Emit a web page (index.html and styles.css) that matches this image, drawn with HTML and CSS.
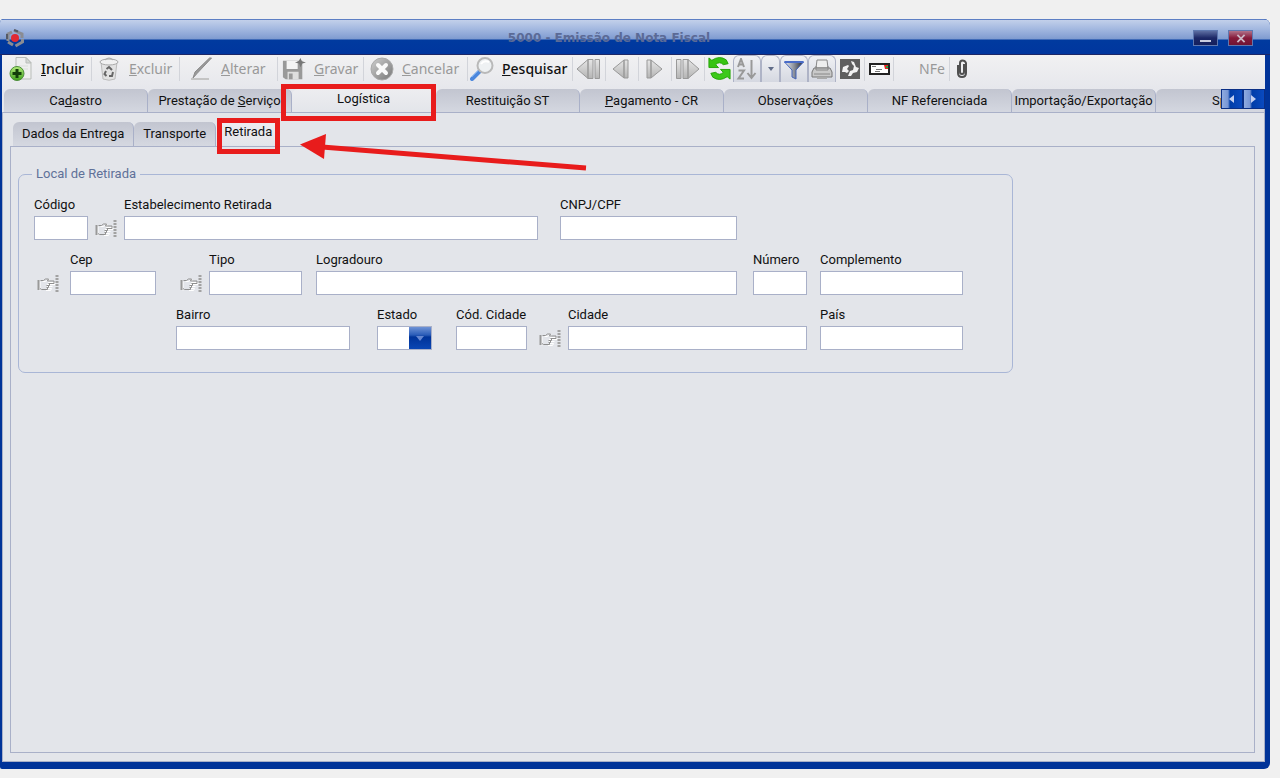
FILE: index.html
```
<!DOCTYPE html>
<html lang="pt-BR">
<head>
  <meta charset="UTF-8">
  <meta name="viewport" content="width=device-width, initial-scale=1.0">
  <title>5000 - Emissão de Nota Fiscal</title>
  <link rel="stylesheet" href="styles.css">
</head>
<body>

<svg class="defs" aria-hidden="true">
  <defs>
    <linearGradient id="gray" x1="0" y1="0" x2="0" y2="1">
      <stop offset="0" stop-color="#e6e6e6"/><stop offset="1" stop-color="#b4b4b4"/>
    </linearGradient>
    <linearGradient id="dark" x1="0" y1="0" x2="1" y2="1">
      <stop offset="0" stop-color="#cfcfcf"/><stop offset="1" stop-color="#777"/>
    </linearGradient>
    <linearGradient id="green" x1="0" y1="0" x2="0" y2="1">
      <stop offset="0" stop-color="#b4ec7c"/><stop offset="1" stop-color="#3fa01c"/>
    </linearGradient>
    <linearGradient id="steel" x1="0" y1="0" x2="1" y2="0">
      <stop offset="0" stop-color="#eef0f4"/><stop offset=".5" stop-color="#8c919c"/><stop offset="1" stop-color="#22262e"/>
    </linearGradient>
    <symbol id="hand" viewBox="0 0 22 20">
      <g fill="none" stroke="#fff" transform="translate(1 1)">
        <path d="M2 6.500v9M4.500 6.500h3l2-1.500h2l-1 2.500h6.500v2h-6M8 15.500h4.500l1-2M9 9.500h5M9 11.500h5.500M9 13.500h4.500"/>
      </g>
      <path d="M1.500 6v10" stroke="#999" stroke-width="2"/>
      <path d="M3.500 6.500h3l2-1.500h3l-1 2h6.500v2.500h-5.500M12.500 9.500v2h-3M11.500 11.500v2h-2M10.500 13.500v2h-6l-1.500-1" fill="none" stroke="#8f8f8f"/>
      <path d="M20 1v18" stroke="#a2a2a2" stroke-width="3" stroke-dasharray="2 1"/>
    </symbol>
  </defs>
</svg>

<main class="window">
  <header class="titlebar">
    <svg class="logo" viewBox="0 0 20 20">
      <g fill="none" stroke="#8a8c93" stroke-width="3">
        <path d="M3 13V6l4-2"/><path d="M9 2.500l8 3.500v4"/><path d="M17.500 11v3l-7 4"/><path d="M3 14l5 3"/>
      </g>
      <path d="M9 2l4 1.500M2 6v5" stroke="#555a66" stroke-width="2"/>
      <circle cx="10" cy="10" r="4" fill="#e02a34"/>
    </svg>
    <h1>5000 - Emissão de Nota Fiscal</h1>
    <div class="win-buttons">
      <button class="minimize" aria-label="Minimizar"></button>
      <button class="close" aria-label="Fechar"><svg viewBox="0 0 10 10"><path d="M1 1l8 8M9 1l-8 8" stroke="#c9b5c4" stroke-width="2"/></svg></button>
    </div>
  </header>

  <nav class="toolbar">
    <button class="tool incluir active">
      <svg viewBox="0 0 24 24"><path d="M7 .5h10l5 5V22H7z" fill="#eee" stroke="#b9bdb9"/><path d="M17 .5V6h5z" fill="#d4d8d4" stroke="#b9bdb9"/><path d="M10 9h9M10 12h9" stroke="#dadeda"/><circle cx="8" cy="16.500" r="7" fill="url(#green)" stroke="#4d8d3b"/><path d="M8 12v9M3.500 16.500h9" stroke="#123d0a" stroke-width="3"/></svg>
      <span><u>I</u>ncluir</span>
    </button>
    <button class="tool excluir" disabled>
      <svg viewBox="0 0 24 24"><path d="M4 5l2 17q6 2.500 12 0l2-17z" fill="#e2e2e2" stroke="#bbb"/><ellipse cx="12" cy="5" rx="9" ry="3" fill="#f1f1f1" stroke="#aaa"/><path d="M8 3q4-4 8 0" fill="none" stroke="#aaa"/><path d="M9.500 12l2.500-2 3 3M16 15l-1 4h-3M9.500 19l-2-2 1.500-3" fill="none" stroke="#666" stroke-width="2"/></svg>
      <span><u>E</u>xcluir</span>
    </button>
    <button class="tool alterar" disabled>
      <svg viewBox="0 0 24 24"><path d="M2 22h18" stroke="#c4c4c4" stroke-width="2"/><path d="M22.500 1L8 16.500l-4 4.500 2-6L20.500 1z" fill="#999" stroke="#8c8c8c"/></svg>
      <span><u>A</u>lterar</span>
    </button>
    <button class="tool gravar" disabled>
      <svg viewBox="0 0 26 24"><path d="M1 3h21v20H4l-3-2z" fill="#999"/><path d="M5 3h12v9H5z" fill="#f4f4f4"/><path d="M6 15h12v8H6z" fill="#dedede"/><path d="M7.500 17h4v6h-4z" fill="#999"/><path d="M20 0l1.500 3.500L26 5l-4 1-2 4-1.500-4L14 5l4-1.500z" fill="#777"/></svg>
      <span><u>G</u>ravar</span>
    </button>
    <button class="tool cancelar" disabled>
      <svg viewBox="0 0 24 24"><circle cx="12" cy="12" r="11" fill="url(#dark)" stroke="#aaa"/><path d="M8 8l8 8M16 8l-8 8" stroke="#fafafa" stroke-width="4" stroke-linecap="round"/></svg>
      <span><u>C</u>ancelar</span>
    </button>
    <button class="tool pesquisar active">
      <svg viewBox="0 0 24 24"><path d="M2 22l8-8" stroke="#4b87dd" stroke-width="4" stroke-linecap="round"/><path d="M1.500 20l6-6" stroke="#a8cdf8"/><circle cx="15" cy="8.500" r="7.500" fill="#eef1f3" stroke="#b9b9b9" stroke-width="2"/><path d="M11 7q3-4 8-2" stroke="#fff" stroke-width="2" fill="none"/></svg>
      <span><u>P</u>esquisar</span>
    </button>
    <button class="nav" disabled aria-label="Primeiro"><svg viewBox="0 0 26 22"><path d="M1 11L12 1.500v19zM12 1.500h5v19h-5zM19 1.500h4.500v19H19z" fill="url(#gray)" stroke="#999"/></svg></button>
    <button class="nav" disabled aria-label="Anterior"><svg viewBox="0 0 26 22"><path d="M4 11L15 2v18zM15 2h4v18h-4z" fill="url(#gray)" stroke="#999"/></svg></button>
    <button class="nav" disabled aria-label="Próximo"><svg viewBox="0 0 26 22"><path d="M20 11L9 2v18zM5 2h4v18H5z" fill="url(#gray)" stroke="#999"/></svg></button>
    <button class="nav" disabled aria-label="Último"><svg viewBox="0 0 26 22"><path d="M24 11L13 1.500v19zM8 1.500h5v19H8zM1.500 1.500H6v19H1.500z" fill="url(#gray)" stroke="#999"/></svg></button>
    <button class="plain" aria-label="Atualizar">
      <svg viewBox="0 0 26 26"><path d="M2 2l3 2.500Q13-1 20 4l2 4-5 1q-4-4-8 0l3 3H2z" fill="#37c412" stroke="#28a50a"/><path d="M24 24l-3-2.500Q13 27 6 22l-2-4 5-1q4 4 8 0l-3-3h10z" fill="#3dc91a" stroke="#28a50a"/></svg>
    </button>
    <button class="boxed" disabled aria-label="Ordenar">
      <svg viewBox="0 0 22 22"><path d="M2 9L5 1l3 8M3 6.500h4M2.500 12.500H8L2.500 20.500H8M15.500 2v17M11.500 15l4 5 4-5" fill="none" stroke="#999" stroke-width="2"/></svg>
    </button>
    <button class="boxed drop" aria-label="Opções de ordem"><svg viewBox="0 0 8 8"><path d="M1 2h6L4 6z" fill="#606c88"/></svg></button>
    <button class="boxed" aria-label="Filtrar">
      <svg viewBox="0 0 22 22"><path d="M1.500 4h19L13 12v9l-4-2v-7z" fill="url(#steel)" stroke="#4565b8"/><path d="M1.500 4h19" stroke="#4a6cc8" stroke-width="2"/></svg>
    </button>
    <button class="boxed print" aria-label="Imprimir">
      <svg viewBox="0 0 22 22"><path d="M6 2h10l1 8H5z" fill="#eee" stroke="#888"/><path d="M3 10h16l2 4v5H1v-5z" fill="#c9c9c9" stroke="#777"/><path d="M5 8v4h12V8M3 16h16" fill="none" stroke="#888"/><path d="M6 20h10" stroke="#aaa" stroke-width="2"/></svg>
    </button>
    <button class="plain group" aria-label="Sincronizar">
      <svg viewBox="0 0 20 20"><path d="M0 0h20v20H0z" fill="#5f5f5f"/><path d="M2 13L3 8l5-2 1 1-2 3 2 2-2 2-2-1zM11 2l3 1 2 5 3 1-2 4-4 1-2 3H8l2-5 3-1 1-4-2-2z" fill="#f2f2f2"/></svg>
    </button>
    <button class="plain group mail" aria-label="Enviar e-mail">
      <svg viewBox="0 0 21 12"><path d="M1 1h19v10H1z" fill="#fff" stroke="#222" stroke-width="2"/><path d="M3 3.500h4M7 6.500h6M6 8.500h5" stroke="#777"/><path d="M15 2h4v4h-3z" fill="#e22"/><path d="M17 3h2v2h-2z" fill="#2a4"/></svg>
    </button>
    <button class="tool nfe" disabled><span>NFe</span></button>
    <button class="plain clip" aria-label="Anexos">
      <svg viewBox="0 0 12 20"><path d="M8 5v8q0 2-2 2t-2-2V4q0-2.500 2.500-2.500T10 4v10q0 4-4 4t-4-4V6" fill="none" stroke="#505050" stroke-width="2"/></svg>
    </button>
  </nav>

  <div class="tabs" role="tablist">
    <button class="tab" role="tab">Ca<u>d</u>astro</button>
    <button class="tab" role="tab">Prestação de <u>S</u>erviço</button>
    <button class="tab selected" role="tab" aria-selected="true">Logística</button>
    <button class="tab" role="tab">Restituição ST</button>
    <button class="tab" role="tab"><u>P</u>agamento - CR</button>
    <button class="tab" role="tab">Observações</button>
    <button class="tab" role="tab">NF Referenciada</button>
    <button class="tab" role="tab">Importação/Exportação</button>
    <button class="tab last" role="tab">Sp</button>
    <div class="tab-scroll">
      <button aria-label="Abas anteriores"><svg viewBox="0 0 6 8"><path d="M5 0v8L0 4z"/></svg></button>
      <button aria-label="Próximas abas"><svg viewBox="0 0 6 8"><path d="M0 0v8l5-4z"/></svg></button>
    </div>
  </div>

  <section class="panel">
    <div class="subtabs" role="tablist">
      <button class="tab" role="tab">Dados da Entrega</button>
      <button class="tab" role="tab">Transporte</button>
      <button class="tab selected" role="tab" aria-selected="true">Retirada</button>
    </div>

    <div class="subpanel">
      <fieldset>
        <legend>Local de Retirada</legend>
        <div class="row row-1">
          <div class="field c1"><label for="codigo">Código</label><input type="text" id="codigo"></div>
          <button class="lookup c2" aria-label="Buscar estabelecimento"><svg><use href="#hand"/></svg></button>
          <div class="field c3"><label for="estab">Estabelecimento Retirada</label><input type="text" id="estab"></div>
          <div class="field c5"><label for="cnpj">CNPJ/CPF</label><input type="text" id="cnpj"></div>
        </div>
        <div class="row row-2">
          <button class="lookup far c1" aria-label="Buscar CEP"><svg><use href="#hand"/></svg></button>
          <div class="field c2"><label for="cep">Cep</label><input type="text" id="cep"></div>
          <button class="lookup c3" aria-label="Buscar tipo"><svg><use href="#hand"/></svg></button>
          <div class="field c4"><label for="tipo">Tipo</label><input type="text" id="tipo"></div>
          <div class="field c6"><label for="logradouro">Logradouro</label><input type="text" id="logradouro"></div>
          <div class="field c8"><label for="numero">Número</label><input type="text" id="numero"></div>
          <div class="field c10"><label for="complemento">Complemento</label><input type="text" id="complemento"></div>
        </div>
        <div class="row row-3">
          <div class="field c1"><label for="bairro">Bairro</label><input type="text" id="bairro"></div>
          <div class="field c3"><label for="estado">Estado</label><select id="estado"><option></option></select></div>
          <div class="field c5"><label for="codcidade">Cód. Cidade</label><input type="text" id="codcidade"></div>
          <button class="lookup c6" aria-label="Buscar cidade"><svg><use href="#hand"/></svg></button>
          <div class="field c7"><label for="cidade">Cidade</label><input type="text" id="cidade"></div>
          <div class="field c9"><label for="pais">País</label><input type="text" id="pais"></div>
        </div>
      </fieldset>
    </div>
  </section>
</main>

<!-- marcações do tutorial -->
<svg class="marks" width="600" height="180" aria-hidden="true">
  <rect x="283.500" y="86.500" width="150" height="32"/>
  <rect x="219.500" y="120.500" width="58" height="31"/>
  <path d="M586 168L322 147"/>
  <path class="head" d="M300 144.500L326 134L324 159z"/>
</svg>

</body>
</html>
```

FILE: styles.css
```
* {
  box-sizing: border-box;
}

body {
  margin: 0;
  min-height: 100vh;
  display: flex;
  flex-direction: column;
  background-color: #f0f0f0;
  font-family: Roboto, "Liberation Sans", sans-serif;
  font-size: 13px;
  line-height: 16px;
  color: #111;
}

button {
  font: inherit;
  color: inherit;
  border: 0;
  padding: 0;
  background: none;
}

.defs {
  position: absolute;
  width: 0;
  height: 0;
}

.window {
  flex: 1;
  display: flex;
  flex-direction: column;
  margin: 19px 10px 9px 0;
  padding: 0 5px 7px 2px;
  background-color: #003399;
  border-radius: 4px 6px 6px 2px;
  overflow: hidden;
}

/* barra de título */
.titlebar {
  display: flex;
  align-items: center;
  height: 36px;
  margin: 0 -5px 0 -2px;
  padding: 2px 17px 0 5px;
  border-top: 1px solid #5d7fc4;
  border-bottom: 1px solid #1c2766;
  background: linear-gradient(#c2d0ea 0, #a3b8e0 9px, #7f9bd0 19px, #003a9f 20px, #00369e 100%);
}

.logo {
  width: 20px;
  height: 20px;
}

.titlebar h1 {
  flex: 1;
  margin: 0;
  text-align: center;
  font: bold 12px/16px "DejaVu Sans", sans-serif;
  color: #5b6a96;
}

.win-buttons {
  display: flex;
  gap: 10px;
}

.win-buttons button {
  display: flex;
  align-items: center;
  justify-content: center;
  width: 25px;
  height: 16px;
  border: 1px solid #5e78b0;
  background: linear-gradient(#5d6ea2, #1c2766 50%, #14205e);
}

.win-buttons .minimize::after {
  content: "";
  width: 11px;
  height: 2px;
  margin-top: 6px;
  background-color: #c8cde0;
}

.win-buttons .close {
  background: linear-gradient(#b0738b, #861a3a 50%, #6f1434);
}

.close svg {
  width: 10px;
  height: 9px;
}

/* barra de ferramentas */
.toolbar {
  display: flex;
  align-items: center;
  height: 34px;
  padding: 0 3px 7px;
  background: linear-gradient(#f1f1f2, #e6e7ec);
  font-family: "Noto Sans", sans-serif;
  font-size: 14px;
}

.toolbar svg {
  display: block;
}

.toolbar > button {
  display: flex;
  align-items: center;
  flex: none;
  height: 24px;
}

.tool,
.nav,
.group {
  border-right: 1px solid #d2d4da;
}

.tool {
  gap: 8px;
  padding-left: 6px;
  color: #999;
}

.tool.active {
  color: #111;
  font-weight: 500;
}

.tool svg {
  width: 24px;
  height: 24px;
}

.incluir { width: 87px; padding-left: 4px; }
.excluir { width: 88px; padding-left: 5px; }
.alterar { width: 98px; padding-left: 9px; }
.gravar { width: 86px; padding-left: 4px; }
.cancelar { width: 104px; }
.pesquisar { width: 105px; padding-left: 2px; }
.nfe { width: 56px; padding-left: 25px; }

.nav {
  width: 33px;
  justify-content: center;
}

.nav svg {
  width: 26px;
  height: 22px;
}

.plain {
  justify-content: center;
  width: 28px;
}

.plain svg {
  width: 25px;
  height: 25px;
}

.plain.group {
  width: 29px;
}

.plain.group svg {
  width: 20px;
  height: 20px;
}

.plain.mail svg {
  width: 21px;
  height: 12px;
}

.plain.clip {
  width: 24px;
}

.plain.clip svg {
  width: 14px;
  height: 20px;
}

.toolbar .boxed {
  justify-content: center;
  width: 28px;
  height: 27px;
  border: 1px solid #aeb3c6;
  border-bottom: 0;
  border-radius: 6px 6px 0 0;
  background: linear-gradient(#f0f1f4, #d5d8e1);
}

.boxed svg {
  width: 22px;
  height: 22px;
}

.toolbar .drop {
  width: 19px;
}

.drop svg {
  width: 8px;
  height: 8px;
}

/* abas */
.tabs {
  position: relative;
  display: flex;
  height: 23px;
  padding-left: 2px;
  background-color: #e6e7ec;
  overflow: hidden;
}

.tab {
  flex: none;
  height: 24px;
  border-right: 1px solid #a9b0c8;
  border-radius: 6px 6px 0 0;
  background: linear-gradient(#c2c5d0, #d5d8e1);
  white-space: nowrap;
}

.tabs .tab {
  width: 144px;
}

.tab.selected {
  background: linear-gradient(#ededf0, #e3e5ea);
  padding-bottom: 4px;
}

.tabs .last {
  flex: 1;
  padding-left: 56px;
  text-align: left;
}

.tab-scroll {
  position: absolute;
  top: 0;
  right: 0;
  display: flex;
}

.tab-scroll button {
  width: 22px;
  height: 20px;
  border: 1px solid #0a2f86;
  background: linear-gradient(90deg, #8fabe0 0, #7795d4 6px, #003da8 8px, #0a4ac0 100%);
}

.tab-scroll svg {
  width: 6px;
  height: 8px;
  fill: #c3cff0;
}

.panel {
  flex: 1;
  display: flex;
  flex-direction: column;
  padding: 9px 9px 8px 7px;
  border: 1px solid #a9b0c8;
  background-color: #e3e5ea;
}

.subtabs {
  display: flex;
  height: 24px;
  padding-left: 3px;
}

.subtabs .tab {
  padding-left: 9px;
  padding-right: 9px;
}

.subtabs .selected {
  padding: 0 7px 4px 8px;
}

.subpanel {
  flex: 1;
  padding: 19px 7px;
  border: 1px solid #a9b0c8;
}

/* formulário */
fieldset {
  max-width: 995px;
  margin: 0;
  padding: 15px 49px 22px 0;
  border: 1px solid #a9b6d6;
  border-radius: 7px;
}

legend {
  margin-left: 13px;
  padding: 0 4px;
  color: #5f7199;
}

.row {
  display: grid;
  margin-bottom: 12px;
}

.row:last-child {
  margin-bottom: 0;
}

.row-1 {
  grid-template-columns: 54px 36px 1fr 22px 177px;
  padding: 0 226px 0 15px;
}

.row-2 {
  grid-template-columns: 51px 86px 53px 93px 14px 1fr 16px 54px 13px 143px;
}

.row-3 {
  grid-template-columns: 174px 27px 55px 24px 71px 41px 1fr 13px 143px;
  padding-left: 157px;
}

.c1 { grid-column: 1; }
.c2 { grid-column: 2; }
.c3 { grid-column: 3; }
.c4 { grid-column: 4; }
.c5 { grid-column: 5; }
.c6 { grid-column: 6; }
.c7 { grid-column: 7; }
.c8 { grid-column: 8; }
.c9 { grid-column: 9; }
.c10 { grid-column: 10; }

.field {
  display: flex;
  flex-direction: column;
  gap: 3px;
}

.field label {
  white-space: nowrap;
}

.field input,
.field select {
  width: 100%;
  height: 24px;
  margin: 0;
  padding: 0 3px;
  border: 1px solid #a9b0c8;
  border-radius: 0;
  font: inherit;
  background-color: #fff;
}

.field select {
  appearance: none;
  background: linear-gradient(#6f93d6, #2a5cb8 8px, #003399 10px, #0a46b4) right / 22px 100% no-repeat #fff;
}

.field:has(select) {
  position: relative;
}

.field:has(select)::after {
  content: "";
  position: absolute;
  right: 8px;
  bottom: 9px;
  border: 4px solid transparent;
  border-top: 5px solid #6486d0;
  border-bottom: 0;
}

.lookup {
  display: flex;
  justify-content: flex-end;
  align-self: end;
  padding: 0 7px 1px 0;
}

.lookup.far {
  padding-right: 11px;
}

.lookup svg {
  width: 22px;
  height: 20px;
}

.marks {
  position: absolute;
  top: 0;
  left: 0;
  pointer-events: none;
  fill: none;
  stroke: #e81c1c;
  stroke-width: 5;
}

.marks .head {
  fill: #e81c1c;
  stroke: none;
}
```
